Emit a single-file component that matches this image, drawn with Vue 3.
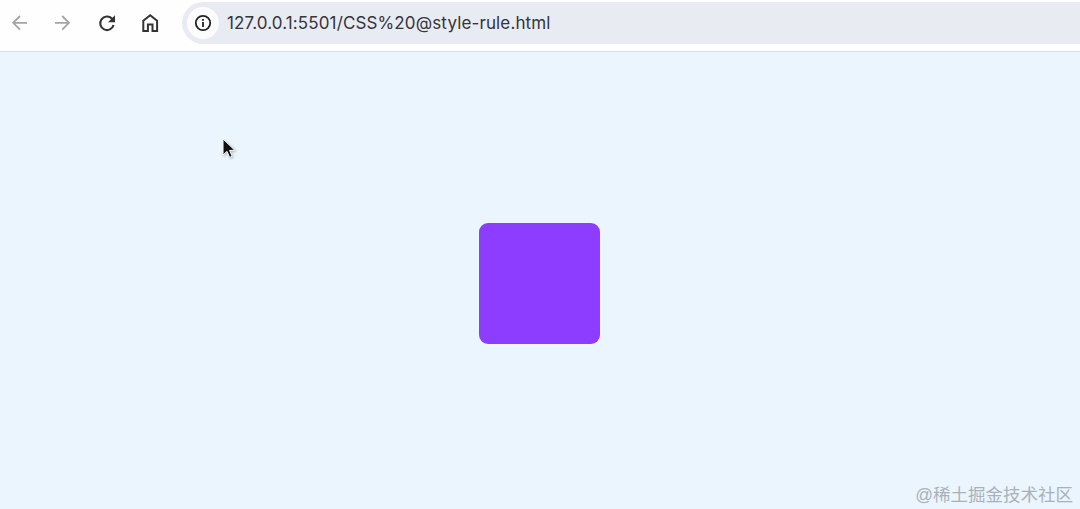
<template>
  <div class="page">
    <div class="toolbar">
      <div class="nav">
        <button class="nav-btn">
          <svg width="20" height="20" viewBox="0 0 20 20"><path d="M17 9.800H3.500M10 3 3.200 9.800l6.800 6.800" fill="none" stroke="#a3a5a8" stroke-width="1.800"/></svg>
        </button>
        <button class="nav-btn">
          <svg width="20" height="20" viewBox="0 0 20 20"><path d="M2 9.800h13.500M9.200 3 16 9.800l-6.800 6.800" fill="none" stroke="#a3a5a8" stroke-width="1.800"/></svg>
        </button>
        <button class="nav-btn">
          <svg width="20" height="20" viewBox="0 0 20 20"><path d="M16.600 12a6.800 6.800 0 1 1-1.700-6.500L17 7.600" fill="none" stroke="#333" stroke-width="2.100"/><path d="M18 2.200v7h-7z" fill="#333"/></svg>
        </button>
        <button class="nav-btn">
          <svg width="20" height="20" viewBox="0 0 20 20"><path d="M3.300 18V7.800L10.200 2.300l6.900 5.500V18h-4.600v-6.500H7.900V18z" fill="none" stroke="#333" stroke-width="2"/></svg>
        </button>
      </div>
      <div class="address">
        <span class="info">
          <svg width="18" height="18" viewBox="0 0 18 18"><circle cx="9" cy="9" r="7.200" fill="none" stroke="#222" stroke-width="1.800"/><rect x="8.100" y="8" width="1.800" height="5" fill="#222"/><rect x="8.100" y="5" width="1.800" height="1.800" fill="#222"/></svg>
        </span>
        <span class="url">127.0.0.1:5501/CSS%20@style-rule.html</span>
      </div>
    </div>
    <div class="content">
      <svg class="cursor" width="14" height="22" viewBox="0 0 14 22"><path d="M1 1v16l4-3.600 2.600 6 2.600-1.100-2.600-5.800 5.200-.3z" fill="#111" stroke="#fff" stroke-width="1"/></svg>
      <div class="box"></div>
      <span class="watermark">@稀土掘金技术社区</span>
    </div>
  </div>
</template>

<script setup>
</script>

<style>
html, body {
  margin: 0;
  overflow: hidden;
}
</style>

<style scoped>
.page {
  width: 1080px;
  height: 509px;
  display: flex;
  flex-direction: column;
  font-family: "Inter", "Liberation Sans", sans-serif;
}

.toolbar {
  height: 52px;
  flex-shrink: 0;
  box-sizing: border-box;
  display: flex;
  align-items: flex-start;
  padding-top: 2px;
  background: #fefefe;
  border-bottom: 1px solid #dcdfe3;
}

.nav {
  display: flex;
  gap: 23.4px;
  padding: 11px 0 0 10px;
  width: 182px;
  box-sizing: border-box;
  flex-shrink: 0;
}

.nav-btn {
  width: 20px;
  height: 20px;
  padding: 0;
  border: none;
  background: none;
  display: flex;
}

.address {
  flex: 1;
  height: 42px;
  display: flex;
  align-items: center;
  background: #e9ebf3;
  border-radius: 21px 0 0 21px;
  padding-left: 5px;
}

.info {
  width: 32px;
  height: 32px;
  border-radius: 50%;
  background: #fcfcfd;
  display: flex;
  align-items: center;
  justify-content: center;
  margin-right: 8px;
}

.info svg {
  display: block;
}

.url {
  font-size: 17px;
  letter-spacing: 0.13px;
  color: #33353a;
  white-space: nowrap;
}

.content {
  flex: 1;
  position: relative;
  background: #ebf5fe;
  display: flex;
  align-items: center;
  justify-content: center;
}

.box {
  width: 121px;
  height: 121px;
  border-radius: 9px;
  background: #8c3dff;
  margin: 6px 0 0 -2px;
}

.cursor {
  position: absolute;
  left: 222px;
  top: 86px;
  filter: drop-shadow(1px 1px 1px rgba(0, 0, 0, 0.25));
}

.watermark {
  position: absolute;
  right: 7px;
  bottom: 3px;
  font-size: 17.5px;
  color: #a9b2ba;
  font-family: "Liberation Sans", "Noto Sans CJK SC", sans-serif;
}
</style>
